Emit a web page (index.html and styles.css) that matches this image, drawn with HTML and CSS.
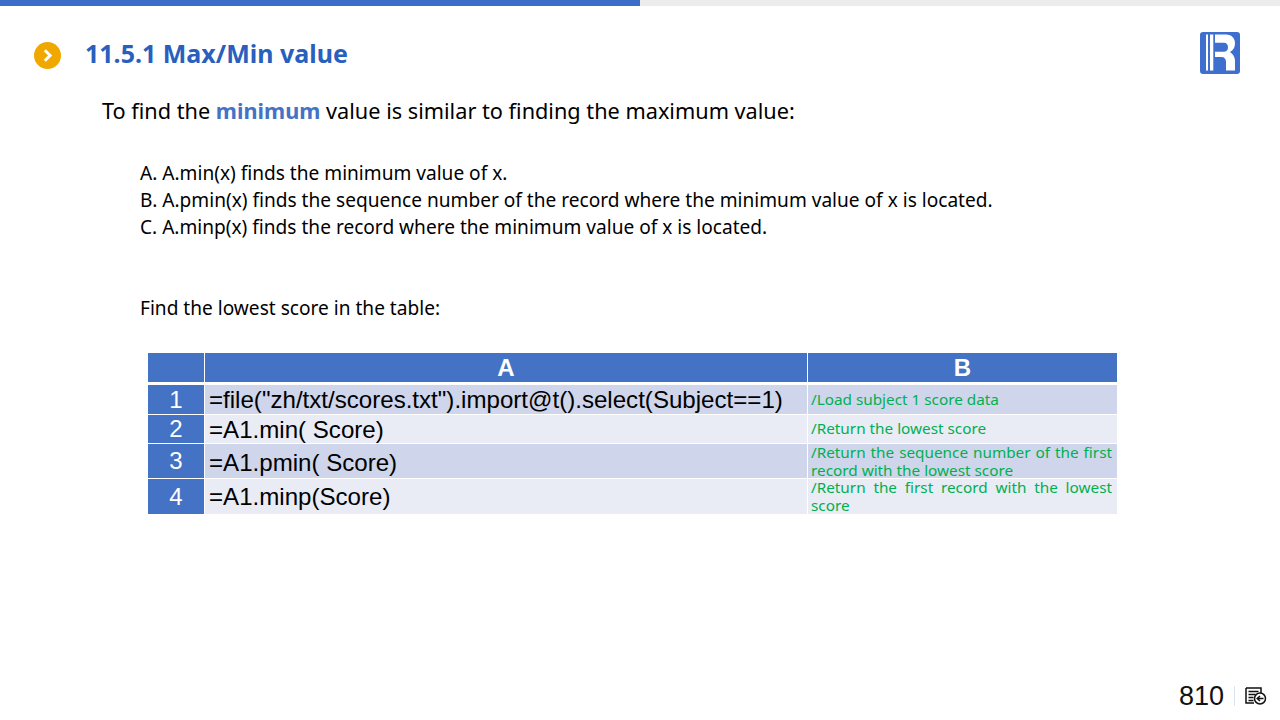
FILE: index.html
```html
<!DOCTYPE html>
<html lang="en">
<head>
<meta charset="utf-8">
<title>11.5.1 Max/Min value</title>
<link rel="stylesheet" href="styles.css">
</head>
<body>
<div class="progress"><div class="progress-fill"></div></div>
<header class="head">
  <div class="head-left">
    <svg class="bullet" width="27" height="27" viewBox="0 0 27 27"><circle cx="13.5" cy="13.5" r="13.5" fill="#f0a800"/><path d="M10.8 8.2l5.3 5.3-5.3 5.3" fill="none" stroke="#fff" stroke-width="3"/></svg>
    <h1 class="title">11.5.1 Max/Min value</h1>
  </div>
  <svg class="logo" width="40" height="42" viewBox="0 0 40 42"><rect width="40" height="42" rx="3" fill="#3f6fce"/><path d="M6 2.500h2v36H6zM10 2.500h3.300v36H10z" fill="#fff"/><path d="M15 2.500H26C32 2.500 35 6.500 35 11.500C35 15.500 33 18.500 30 20C33 22 35 25 35 29V38.500H26V30C26 27 24.500 25 21.500 25H15V19.700H24C26.500 19.700 28 18 28 15.200C28 12.500 26.500 10.700 24 10.700H15Z" fill="#fff"/></svg>
</header>
<main class="content">
  <p class="lead">To find the <strong class="hl">minimum</strong> value is similar to finding the maximum value:</p>
  <ol class="opts">
    <li>A. A.min(x) finds the minimum value of x.</li>
    <li>B. A.pmin(x) finds the sequence number of the record where the minimum value of x is located.</li>
    <li>C. A.minp(x) finds the record where the minimum value of x is located.</li>
  </ol>
  <p class="find">Find the lowest score in the table:</p>
  <table class="sheet">
    <colgroup><col class="c0"><col class="c1"><col class="c2"></colgroup>
    <thead>
      <tr class="r-head"><th></th><th>A</th><th>B</th></tr>
    </thead>
    <tbody>
      <tr class="r1 dark"><th>1</th><td class="code">=file("zh/txt/scores.txt").import@t().select(Subject==1)</td><td class="note">/Load subject 1 score data</td></tr>
      <tr class="r2 light"><th>2</th><td class="code">=A1.min( Score)</td><td class="note">/Return the lowest score</td></tr>
      <tr class="r3 dark"><th>3</th><td class="code">=A1.pmin( Score)</td><td class="note wrapped"><div class="just">/Return the sequence number of the first record with the lowest score</div></td></tr>
      <tr class="r4 light"><th>4</th><td class="code">=A1.minp(Score)</td><td class="note wrapped"><div class="just">/Return the first record with the lowest score</div></td></tr>
    </tbody>
  </table>
</main>
<footer class="foot">
  <span class="page">810</span>
  <span class="sep"></span>
  <svg width="22" height="18" viewBox="0 0 22 18"><path d="M1 1h15v6M1 1v15h8M3.500 4.500h10M3.500 7.500h7M3.500 10.500h5M3.500 13.500h5" fill="none" stroke="#111" stroke-width="1.500"/><circle cx="15" cy="11.500" r="5.500" fill="#fff" stroke="#111" stroke-width="1.500"/><path d="M18.500 11.500h-6M15 9l-2.800 2.500L15 14" fill="none" stroke="#111" stroke-width="1.500"/></svg>
</footer>
</body>
</html>
```

FILE: styles.css
```css
* { box-sizing: border-box; }
html, body { margin: 0; height: 720px; overflow: hidden; }
body {
  position: relative;
  background: #fff;
  color: #000;
  font-family: "Noto Sans", "Open Sans", sans-serif;
}
.progress { height: 6px; background: #ececec; }
.progress-fill { width: 640px; height: 6px; background: #3c6ec8; }
.head {
  display: flex;
  justify-content: space-between;
  align-items: flex-start;
  padding: 26px 40px 0 34px;
  height: 74px;
}
.head-left { display: flex; align-items: center; gap: 24px; height: 46px; }
.bullet { display: block; }
.title { margin: -4px 0 0; font-size: 25px; line-height: 46px; font-weight: 700; color: #2a5fbe; letter-spacing: 0; }
.content { padding: 0 0 0 102px; }
.lead { margin: 15px 0 0; font-size: 21.700px; line-height: 32px; }
.hl { color: #4472c4; font-weight: 700; }
.opts { list-style: none; margin: 33px 0 0 38px; padding: 0; font-size: 19.100px; line-height: 27px; }
.find { margin: 54px 0 0 38px; font-size: 19.100px; line-height: 27px; }
.sheet {
  margin: 31px 0 0 46px;
  width: 969px;
  table-layout: fixed;
  border-collapse: separate;
  border-spacing: 0;
  font-family: "Liberation Sans", Arial, sans-serif;
}
.c0 { width: 57px; }
.c1 { width: 603px; }
.c2 { width: 309px; }
.sheet th, .sheet td { padding: 0; border-right: 1px solid #fff; border-bottom: 1px solid #fff; }
.sheet th:last-child, .sheet td:last-child { border-right: 0; }
.sheet th { background: #4472c4; color: #fff; font-weight: 400; font-size: 24px; text-align: center; line-height: 1; }
.r-head th { height: 32px; border-bottom-width: 3px; font-weight: 700; }
.sheet td.code { font-size: 24.100px; line-height: 27px; padding-left: 4px; white-space: nowrap; }
.r2 td.code { padding-top: 1px; }
.r3 td.code { padding-top: 2px; }
.dark td { background: #cfd5ea; }
.light td { background: #e9ebf5; }
.r1 th, .r1 td { height: 30px; }
.r2 th, .r2 td { height: 29px; }
.r3 th, .r3 td { height: 35px; }
.r4 th, .r4 td { height: 35px; border-bottom: 0; }
.sheet td.note {
  font-family: "Noto Sans", "Open Sans", sans-serif;
  font-size: 15.300px;
  line-height: 18px;
  color: #00b050;
  padding: 0 5px 2px 3px;
  white-space: normal;
}
.sheet td.wrapped { padding-bottom: 0; vertical-align: top; }
.just { margin: -1px 0; text-align: justify; }
.foot {
  position: absolute;
  right: 13px;
  bottom: 9px;
  display: flex;
  align-items: center;
  gap: 10px;
}
.page { font-family: "Liberation Sans", Arial, sans-serif; font-size: 27px; line-height: 30px; color: #111; }
.sep { width: 1px; height: 20px; background: #dbe2f0; }
```
